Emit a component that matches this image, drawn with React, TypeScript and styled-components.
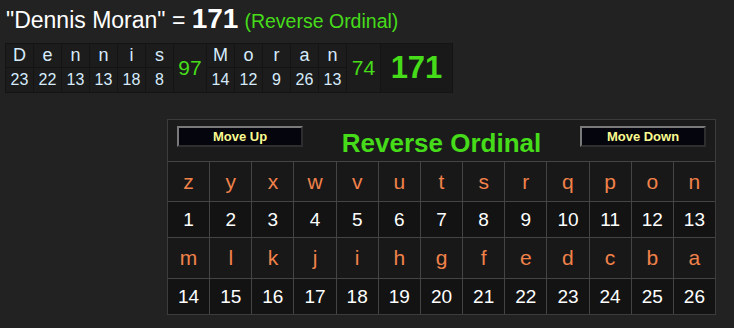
import React from "react";
import styled, { createGlobalStyle } from "styled-components";

const GlobalStyle = createGlobalStyle`
  html, body {
    margin: 0;
    padding: 0;
    background: #222222;
  }
  body {
    font-family: "Liberation Sans", Arial, sans-serif;
    color: #ffffff;
  }
`;

const Page = styled.div`
  width: 734px;
  height: 328px;
  overflow: hidden;
  box-sizing: border-box;
  padding: 0 0 0 5px;
`;

const Heading = styled.div`
  display: flex;
  align-items: baseline;
  height: 36px;
  padding: 3px 0 0 1px;
  box-sizing: border-box;
  white-space: pre;
`;

const Phrase = styled.span`
  font-size: 23px;
  color: #ffffff;
`;

const Total = styled.span`
  font-size: 28px;
  font-weight: bold;
  color: #ffffff;
`;

const CipherName = styled.span`
  font-size: 19.5px;
  color: #46dc1a;
  margin-left: 6px;
`;

const Breakdown = styled.div<{ $cols: string }>`
  display: grid;
  grid-template-columns: ${(p) => p.$cols};
  grid-template-rows: 23px 24px;
  gap: 1px;
  padding: 1px;
  margin-top: 7px;
  width: max-content;
  background: #141414;
`;

const LetterCell = styled.div<{ $row: number }>`
  grid-row: ${(p) => p.$row};
  background: #1c1c1c;
  color: #d6ebfb;
  display: flex;
  align-items: center;
  justify-content: center;
  font-size: ${(p) => (p.$row === 1 ? 18 : 16)}px;
`;

const WordSum = styled.div<{ $big?: boolean }>`
  grid-row: 1 / span 2;
  background: ${(p) => (p.$big ? "#191919" : "#1c1c1c")};
  color: #46dc1a;
  display: flex;
  align-items: center;
  justify-content: center;
  font-size: ${(p) => (p.$big ? 31 : 21)}px;
  font-weight: ${(p) => (p.$big ? "bold" : "normal")};
`;

const Chart = styled.div`
  margin: 26px 0 0 162px;
  width: 549px;
  box-sizing: border-box;
  border: 1px solid #3c3c3c;
  background: #1b1b1b;
`;

const ChartHeader = styled.div`
  display: flex;
  justify-content: space-between;
  align-items: flex-start;
  height: 42px;
  padding: 6px 9px 0 9px;
  box-sizing: border-box;
  border-bottom: 1px solid #444444;
`;

const MoveButton = styled.button`
  width: 126px;
  height: 21px;
  padding: 0;
  box-sizing: border-box;
  background: #05050e;
  border-style: solid;
  border-width: 2px;
  border-color: #7a7a7a #2e2e2e #2e2e2e #7a7a7a;
  color: #fbfb90;
  font-family: "Liberation Sans", Arial, sans-serif;
  font-size: 13px;
  font-weight: bold;
  line-height: 15px;
`;

const Title = styled.div`
  font-size: 26px;
  font-weight: bold;
  color: #46dc1a;
  line-height: 30px;
  padding-top: 2px;
`;

const Grid = styled.div`
  display: grid;
  grid-template-columns: repeat(13, 1fr);
  grid-template-rows: 39px 35px 40px 35px;
  gap: 1px;
  background: #444444;
`;

const Cell = styled.div<{ $letter?: boolean }>`
  background: ${(p) => (p.$letter ? "#181818" : "#131313")};
  color: ${(p) => (p.$letter ? "#f0824a" : "#ffffff")};
  font-size: ${(p) => (p.$letter ? 21 : 19)}px;
  display: flex;
  align-items: center;
  justify-content: center;
`;

const alphabet = "zyxwvutsrqponmlkjihgfedcba".split("");

const words = [
  { letters: "Dennis", values: [23, 22, 13, 13, 18, 8], sum: 97 },
  { letters: "Moran", values: [14, 12, 9, 26, 13], sum: 74 },
];

export default function App() {
  const cols = "27px ".repeat(6) + "32px " + "27px ".repeat(5) + "33px 71px";
  let col = 0;
  const breakdown: React.ReactNode[] = [];
  words.forEach((w, wi) => {
    w.letters.split("").forEach((ch, i) => {
      col += 1;
      breakdown.push(
        <LetterCell key={`l${wi}-${i}`} $row={1} style={{ gridColumn: col }}>
          {ch}
        </LetterCell>
      );
      breakdown.push(
        <LetterCell key={`v${wi}-${i}`} $row={2} style={{ gridColumn: col }}>
          {w.values[i]}
        </LetterCell>
      );
    });
    col += 1;
    breakdown.push(
      <WordSum key={`s${wi}`} style={{ gridColumn: col }}>
        {w.sum}
      </WordSum>
    );
  });
  col += 1;
  breakdown.push(
    <WordSum key="total" $big style={{ gridColumn: col }}>
      171
    </WordSum>
  );

  const rows = [alphabet.slice(0, 13), alphabet.slice(13)];

  return (
    <Page>
      <GlobalStyle />
      <Heading>
        <Phrase>"Dennis Moran" = </Phrase>
        <Total>171</Total>
        <CipherName>(Reverse Ordinal)</CipherName>
      </Heading>
      <Breakdown $cols={cols}>{breakdown}</Breakdown>
      <Chart>
        <ChartHeader>
          <MoveButton>Move Up</MoveButton>
          <Title>Reverse Ordinal</Title>
          <MoveButton>Move Down</MoveButton>
        </ChartHeader>
        <Grid>
          {rows.map((letters, r) => (
            <React.Fragment key={r}>
              {letters.map((ch) => (
                <Cell key={ch} $letter>
                  {ch}
                </Cell>
              ))}
              {letters.map((_, i) => (
                <Cell key={`n${i}`}>{r * 13 + i + 1}</Cell>
              ))}
            </React.Fragment>
          ))}
        </Grid>
      </Chart>
    </Page>
  );
}
